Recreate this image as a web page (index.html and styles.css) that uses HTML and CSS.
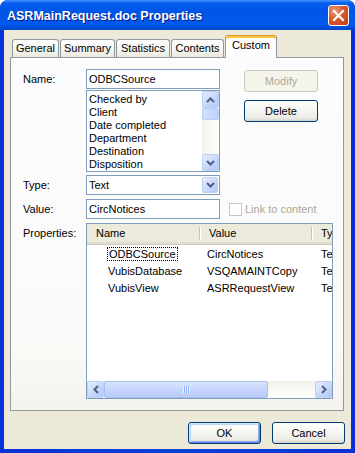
FILE: index.html
```html
<!DOCTYPE html>
<html lang="en">
<head>
  <meta charset="UTF-8">
  <meta name="viewport" content="width=device-width, initial-scale=1.0">
  <title>ASRMainRequest.doc Properties</title>
  <link rel="stylesheet" href="styles.css">
</head>
<body>
  <div class="window">
    <div class="titlebar">
      <span class="title">ASRMainRequest.doc Properties</span>
      <span class="close">
        <svg width="13" height="13" viewBox="0 0 13 13"><path d="M2 2L11 11M11 2L2 11" stroke="#fff" stroke-width="2.2" stroke-linecap="square"/></svg>
      </span>
    </div>

    <div class="client">
      <div class="tabs">
        <div class="tab w-general">General</div>
        <div class="tab w-summary">Summary</div>
        <div class="tab w-stats">Statistics</div>
        <div class="tab w-contents">Contents</div>
        <div class="tab active">Custom</div>
      </div>

      <div class="panel">
        <!-- name + list of preset names -->
        <div class="row">
          <div class="lbl">Name:</div>
          <div class="field">
            <div class="input">ODBCSource</div>
            <div class="listbox">
              <ul class="items">
                <li>Checked by</li>
                <li>Client</li>
                <li>Date completed</li>
                <li>Department</li>
                <li>Destination</li>
                <li>Disposition</li>
              </ul>
              <div class="vscroll">
                <span class="sbtn"><svg width="9" height="6" viewBox="0 0 9 6"><path d="M1 5L4.5 1.5L8 5" fill="none" stroke="#4D6185" stroke-width="2"/></svg></span>
                <span class="vthumb"></span>
                <span class="track"></span>
                <span class="sbtn"><svg width="9" height="6" viewBox="0 0 9 6"><path d="M1 1L4.5 4.5L8 1" fill="none" stroke="#4D6185" stroke-width="2"/></svg></span>
              </div>
            </div>
          </div>
          <div class="side">
            <div class="btn disabled">Modify</div>
            <div class="btn delete">Delete</div>
          </div>
        </div>

        <div class="row gap3">
          <div class="lbl">Type:</div>
          <div class="field">
            <div class="input combo">
              <span class="combo-text">Text</span>
              <span class="sbtn drop"><svg width="9" height="6" viewBox="0 0 9 6"><path d="M1 1L4.5 4.5L8 1" fill="none" stroke="#4D6185" stroke-width="2"/></svg></span>
            </div>
          </div>
        </div>

        <div class="row gap4">
          <div class="lbl">Value:</div>
          <div class="field">
            <div class="input">CircNotices</div>
          </div>
          <div class="check">
            <span class="box"></span>
            <span class="check-text">Link to content</span>
          </div>
        </div>

        <div class="row gap4">
          <div class="lbl">Properties:</div>
          <div class="listview">
            <div class="lv-head">
              <div class="hcell c-name">Name</div>
              <div class="hcell c-value">Value</div>
              <div class="hcell c-type">Type</div>
            </div>
            <div class="lv-body">
              <div class="lv-row">
                <div class="cell c-name"><span class="focus">ODBCSource</span></div>
                <div class="cell c-value">CircNotices</div>
                <div class="cell c-type">Text</div>
              </div>
              <div class="lv-row">
                <div class="cell c-name">VubisDatabase</div>
                <div class="cell c-value">VSQAMAINTCopy</div>
                <div class="cell c-type">Text</div>
              </div>
              <div class="lv-row">
                <div class="cell c-name">VubisView</div>
                <div class="cell c-value">ASRRequestView</div>
                <div class="cell c-type">Text</div>
              </div>
            </div>
            <div class="hscroll">
              <span class="sbtn"><svg width="6" height="9" viewBox="0 0 6 9"><path d="M5 1L1.5 4.5L5 8" fill="none" stroke="#4D6185" stroke-width="2"/></svg></span>
              <span class="hthumb"><span class="grip"></span></span>
              <span class="track"></span>
              <span class="sbtn"><svg width="6" height="9" viewBox="0 0 6 9"><path d="M1 1L4.5 4.5L1 8" fill="none" stroke="#4D6185" stroke-width="2"/></svg></span>
            </div>
          </div>
        </div>
      </div>

      <div class="footer">
        <div class="btn default">OK</div>
        <div class="btn">Cancel</div>
      </div>
    </div>
  </div>
</body>
</html>
```

FILE: styles.css
```css
body {
  margin: 0;
  font-family: "Liberation Sans", Arial, sans-serif;
  font-size: 11px;
  color: #000;
  background: #fff;
}
.window {
  width: 355px;
  height: 453px;
  box-sizing: border-box;
  display: flex;
  flex-direction: column;
  background: linear-gradient(to right, #0831D9, #0842D6 50%, #0831D9);
  border-radius: 8px 8px 0 0;
  overflow: hidden;
}
.titlebar {
  height: 30px;
  flex: none;
  display: flex;
  align-items: center;
  justify-content: space-between;
  padding: 0 6px 0 7px;
  background: linear-gradient(to bottom, #3D95FF 0, #0A5DEB 3px, #0058EE 6px, #0055E5 45%, #0058EE 80%, #0046C8 100%);
}
.title {
  color: #fff;
  font-weight: bold;
  font-size: 12.5px;
  text-shadow: 1px 1px #0A1883;
  margin-top: 1px;
}
.close {
  width: 21px;
  height: 21px;
  box-sizing: border-box;
  border: 1px solid #fff;
  border-radius: 3px;
  display: flex;
  align-items: center;
  justify-content: center;
  background: radial-gradient(circle at 30% 25%, #E99A7C 0, #D9582F 45%, #C23A16 100%);
  margin-top: 1px;
}
.client {
  flex: 1;
  margin: 0 4px 4px;
  background: #ECE9D8;
  padding-top: 5px;
  display: flex;
  flex-direction: column;
}

/* tabs */
.tabs {
  display: flex;
  align-items: flex-end;
  height: 22px;
  padding-left: 8px;
  gap: 1px;
  position: relative;
  z-index: 1;
}
.tab {
  height: 18px;
  box-sizing: border-box;
  border: 1px solid #919B9C;
  border-bottom: none;
  border-radius: 3px 3px 0 0;
  background: linear-gradient(to bottom, #fff, #F3F2EC 70%, #EAE8DE);
  text-align: center;
  line-height: 17px;
}
.w-general { width: 47px; }
.w-summary { width: 55px; }
.w-stats { width: 54px; }
.w-contents { width: 53px; }
.tab.active {
  width: 52px;
  height: 23px;
  margin-bottom: -1px;
  background: #FCFCFE;
  border-top: 1px solid #E68B2C;
  box-shadow: inset 0 2px 0 #FFC73C;
  line-height: 19px;
}

/* property page */
.panel {
  margin: 0 7px 0 6px;
  border: 1px solid #919B9C;
  background: linear-gradient(to bottom, #FCFCFE, #FAFAF8 80%, #F4F3EE);
  padding: 11px 10px 11px 12px;
}
.row {
  display: flex;
  align-items: flex-start;
}
.gap3 { margin-top: 3px; }
.gap4 { margin-top: 4px; }
.lbl {
  width: 63px;
  line-height: 20px;
  flex: none;
}
.field {
  width: 134px;
  flex: none;
}
.input {
  height: 20px;
  box-sizing: border-box;
  border: 1px solid #7F9DB9;
  background: #fff;
  padding: 0 2px;
  line-height: 18px;
}
.listbox {
  height: 82px;
  margin-top: 1px;
  box-sizing: border-box;
  border: 1px solid #7F9DB9;
  background: #fff;
  display: flex;
}
.items {
  flex: 1;
  list-style: none;
  margin: 0;
  padding: 2px 2px 0;
  overflow: hidden;
}
.items li {
  height: 13px;
  line-height: 13px;
}
.vscroll {
  width: 17px;
  display: flex;
  flex-direction: column;
  background: linear-gradient(to right, #F3F1EB, #FEFEFB);
}
.hscroll {
  height: 17px;
  display: flex;
  background: linear-gradient(to bottom, #F3F1EB, #FEFEFB);
}
.track { flex: 1; }
.sbtn {
  width: 17px;
  height: 17px;
  flex: none;
  box-sizing: border-box;
  display: flex;
  align-items: center;
  justify-content: center;
  border: 1px solid #BCCFF7;
  border-radius: 2px;
  background: linear-gradient(135deg, #E6EEFE, #C4D6FB 60%, #B4C8F6);
}
.vthumb {
  height: 10px;
  border: 1px solid #BCCFF7;
  border-radius: 2px;
  background: linear-gradient(to right, #D4E0FD, #BFD1FA);
}
.hthumb {
  width: 164px;
  flex: none;
  box-sizing: border-box;
  border: 1px solid #A6BDF2;
  border-radius: 2px;
  background: linear-gradient(to bottom, #D9E4FE, #C2D3FB 60%, #B8CBF8);
  display: flex;
  align-items: center;
  justify-content: center;
}
.grip {
  width: 7px;
  height: 7px;
  background: repeating-linear-gradient(to right, #EEF4FE 0, #EEF4FE 1px, #8CB0F8 1px, #8CB0F8 2px);
}

/* buttons */
.side {
  margin-left: 24px;
  margin-top: 1px;
}
.btn {
  width: 74px;
  height: 22px;
  box-sizing: border-box;
  border: 1px solid #003C74;
  border-radius: 3px;
  background: linear-gradient(to bottom, #fff, #F4F4F0 50%, #ECEBE6 85%, #D6D0C5);
  text-align: center;
  line-height: 20px;
}
.btn.disabled {
  border-color: #C9C7BA;
  background: #F5F4EA;
  color: #ACA899;
}
.btn.delete { margin-top: 8px; }
.btn.default {
  box-shadow: inset 1px 1px 0 #CEE7FF, inset -1px -1px 0 #6982EE, inset 2px 2px 0 #BCD4F6, inset -2px -2px 0 #89ADE4;
}

/* combo */
.combo {
  display: flex;
  align-items: center;
  padding-right: 1px;
}
.combo-text { flex: 1; }
.drop { width: 16px; height: 16px; }

/* checkbox */
.check {
  display: flex;
  align-items: center;
  height: 20px;
  margin-left: 9px;
  color: #ACA899;
}
.box {
  width: 13px;
  height: 13px;
  box-sizing: border-box;
  border: 1px solid #CAC8BB;
  background: #fff;
  margin-right: 3px;
}

/* list view */
.listview {
  width: 247px;
  height: 176px;
  box-sizing: border-box;
  border: 1px solid #7F9DB9;
  background: #fff;
  display: flex;
  flex-direction: column;
}
.lv-head {
  height: 21px;
  box-sizing: border-box;
  display: flex;
  background: #EBEADB;
  border-bottom: 1px solid #D0CBB8;
  box-shadow: inset 0 -2px 0 #E2DED0;
  overflow: hidden;
}
.hcell {
  flex: none;
  line-height: 19px;
  padding-left: 9px;
  box-sizing: border-box;
  white-space: nowrap;
}
.lv-head .c-name,
.lv-head .c-value {
  border-right: 1px solid #C7C5B2;
  box-shadow: 1px 0 0 #fff;
  margin: 3px 0 4px;
  line-height: 13px;
}
.lv-head .c-type {
  margin-top: 3px;
  line-height: 13px;
}
.c-name { width: 113px; }
.c-value { width: 112px; }
.c-type { width: 30px; }
.lv-body {
  flex: 1;
  padding-top: 1px;
  overflow: hidden;
}
.lv-row {
  display: flex;
  height: 17px;
  line-height: 17px;
  white-space: nowrap;
}
.cell {
  flex: none;
  box-sizing: border-box;
  overflow: hidden;
}
.lv-row .c-name { padding-left: 21px; }
.lv-row .c-value { padding-left: 7px; }
.lv-row .c-type { padding-left: 9px; }
.focus {
  outline: 1px dotted #000;
  padding: 0 1px;
}

.footer {
  display: flex;
  justify-content: flex-end;
  gap: 11px;
  padding: 11px 6px 0 0;
}
.footer .btn { width: 73px; }
```
